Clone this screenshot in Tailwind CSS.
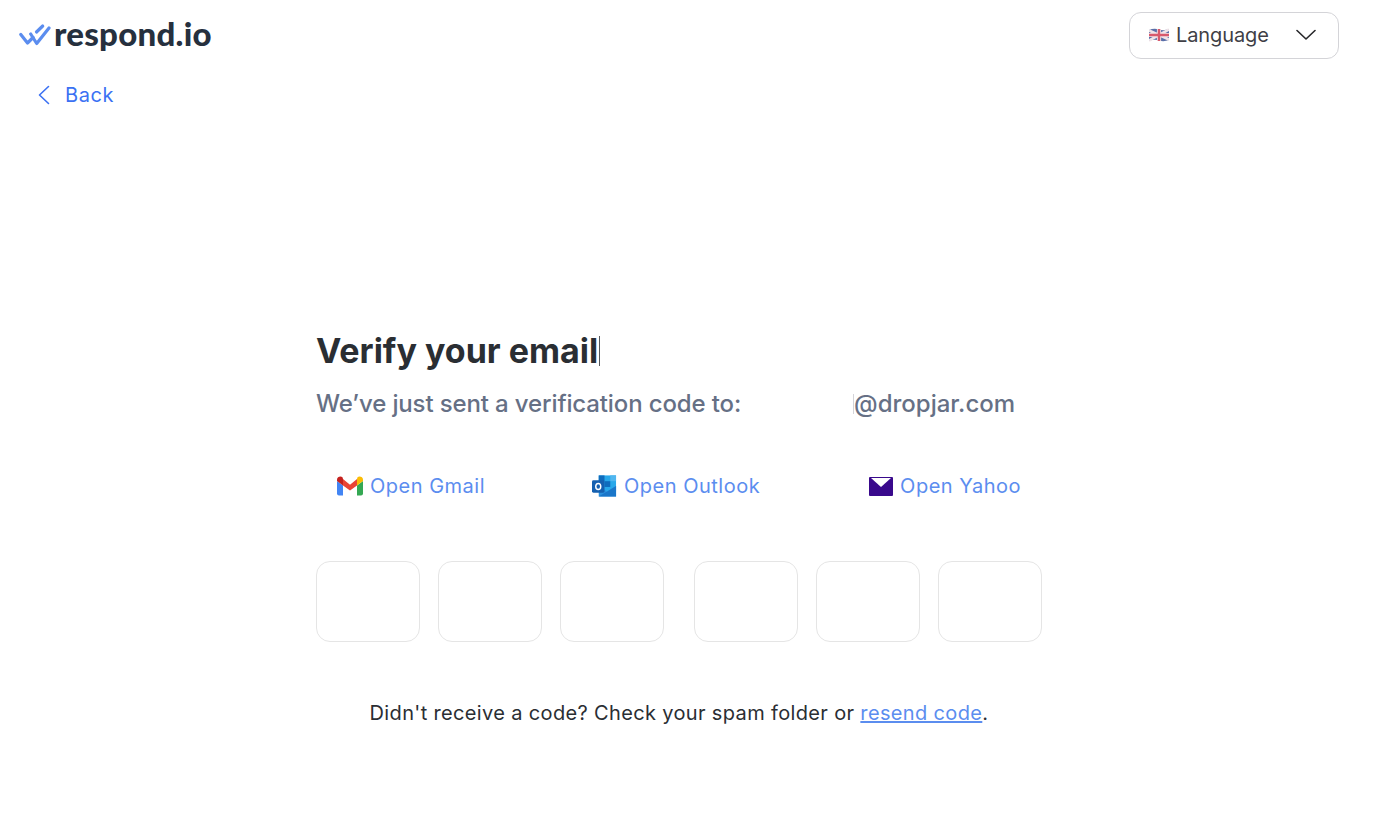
<!DOCTYPE html>
<html lang="en">

<head>
    <meta charset="UTF-8">
    <meta name="viewport" content="width=device-width, initial-scale=1.0">
    <script src="https://cdn.jsdelivr.net/npm/@tailwindcss/browser@4"></script>
    <title>Verify your email</title>
</head>

<body class="bg-white font-['Inter',sans-serif]">
    <div class="h-[819px] flex flex-col overflow-hidden">
        <header class="flex justify-between items-start pl-[19px] pr-[40px] pt-[12px]">
            <div class="flex flex-col">
                <a href="#" class="flex items-center gap-[3px] h-[43px]">
                    <svg width="32" height="24" viewBox="0 0 32 24" fill="none" stroke="#5b8def" stroke-width="3.2" stroke-linecap="round" stroke-linejoin="round">
                        <path d="M1.8 12.5 L8.5 21 L14 15.5" />
                        <path d="M11.7 12 L17.7 21.5 L30 6" />
                        <path d="M17.5 10 L23.7 4" />
                    </svg>
                    <span class="font-['Lato',sans-serif] font-black text-[33px] leading-none text-[#26303e] tracking-[0.25px]">respond.io</span>
                </a>
                <a href="#" class="flex items-center gap-[15px] pl-[19px] mt-[16px] h-[47px] text-[#3b71f3] text-[20px] tracking-[0.6px]">
                    <svg width="12" height="20" viewBox="0 0 12 20" fill="none" stroke="#3b71f3" stroke-width="1.6" stroke-linecap="round" stroke-linejoin="round">
                        <path d="M10.5 1.5 L1.5 10 L10.5 18.5" />
                    </svg>
                    Back
                </a>
            </div>
            <button class="w-[210px] h-[47px] flex items-center justify-between pl-[19px] pr-[22px] rounded-[12px] border border-[#d4d4d8] text-[20px] leading-[26px] tracking-[-0.1px] pb-[2px] text-[#3f3f46]">
                <span class="flex items-center gap-[7px]">
                    <svg width="20" height="14" viewBox="0 0 20 14">
                        <path d="M0 2 Q5 0 10 1.5 T20 1 V12 Q15 14 10 12.5 T0 13 Z" fill="#5a6fa8" />
                        <path d="M0 2.5 L20 11.5 M20 1.5 L0 12.5" stroke="#f1e4e8" stroke-width="2.6" />
                        <path d="M10 1 V13 M0 7 H20" stroke="#f1e4e8" stroke-width="4.2" />
                        <path d="M10 1 V13 M0 7 H20" stroke="#d8596c" stroke-width="2.4" />
                    </svg>
                    Language
                </span>
                <svg width="20" height="12" viewBox="0 0 20 12" fill="none" stroke="#27272a" stroke-width="1.6" stroke-linecap="round" stroke-linejoin="round">
                    <path d="M1 1.5 L10 10 L19 1.5" />
                </svg>
            </button>
        </header>

        <main class="w-[726px] ml-[316px] mt-[205px]">
            <div class="flex items-center h-[56px]">
                <h1 class="text-[34px] leading-[56px] font-bold text-[#2a2e33]">Verify your email</h1>
                <span class="w-px h-[30px] ml-px bg-[#55585c]"></span>
            </div>
            <div class="flex items-center mt-[9px] h-[32px] text-[24px] font-medium text-[#667085]">
                <span class="tracking-[-0.13px]">We’ve just sent a verification code to:</span>
                <span class="ml-[112px] w-px h-[20px] bg-[#d4d4d8]"></span>
                <span>@dropjar.com</span>
            </div>

            <div class="flex mt-[50px] h-[32px] text-[20px] tracking-[0.5px] text-[#5b8def]">
                <a href="#" class="flex items-center gap-[7px] ml-[21px]">
                    <svg width="26" height="20" viewBox="0 0 26 20">
                        <path d="M0 5 V17.5 Q0 19.5 2 19.5 H6 V9.5 Z" fill="#4285f4" />
                        <path d="M20 9.5 V19.5 H24 Q26 19.5 26 17.5 V5 Z" fill="#34a853" />
                        <path d="M6 3 L13 8.7 L20 3 V9.5 L13 14.5 L6 9.5 Z" fill="#ea4335" />
                        <path d="M20 3 L20.5 1.2 C22.5 -0.5 26 1 26 3.5 V5 L20 9.5 Z" fill="#fbbc04" />
                        <path d="M0 5 V3.5 C0 1 3.5 -0.5 5.5 1.2 L6 3 V9.5 Z" fill="#c5221f" />
                    </svg>
                    Open Gmail
                </a>
                <a href="#" class="flex items-center gap-[7px] ml-[107px]">
                    <svg width="25" height="24" viewBox="0 0 26 24">
                        <rect x="7" y="1" width="18" height="17" fill="#28a8ea" />
                        <rect x="7" y="1" width="6" height="6" fill="#0f6cbd" />
                        <rect x="19" y="1" width="6" height="6" fill="#50b6ef" />
                        <rect x="13" y="7" width="6" height="6" fill="#0f6cbd" />
                        <path d="M7 12 L16 18 L25 12 V23 H7 Z" fill="#2a8fdd" />
                        <path d="M7 23 L25 12 V23 Z" fill="#1a76c9" />
                        <rect x="0" y="6" width="13" height="13" rx="1.5" fill="#1560b0" />
                        <ellipse cx="6.5" cy="12.5" rx="2.6" ry="3.2" fill="none" stroke="#ffffff" stroke-width="1.5" />
                    </svg>
                    Open Outlook
                </a>
                <a href="#" class="flex items-center gap-[7px] ml-[109px]">
                    <svg width="24" height="20" viewBox="0 0 24 20">
                        <rect x="0" y="1" width="24" height="19" rx="1" fill="#39098c" />
                        <path d="M2 2 H22 L12 11 Z" fill="#ffffff" />
                    </svg>
                    Open Yahoo
                </a>
            </div>

            <div class="flex mt-[59px]">
                <div class="flex gap-[18px]">
                    <input class="w-[104px] h-[81px] rounded-[14px] border border-[#e5e5e5]" type="text" maxlength="1">
                    <input class="w-[104px] h-[81px] rounded-[14px] border border-[#e5e5e5]" type="text" maxlength="1">
                    <input class="w-[104px] h-[81px] rounded-[14px] border border-[#e5e5e5]" type="text" maxlength="1">
                </div>
                <div class="flex gap-[18px] ml-[30px]">
                    <input class="w-[104px] h-[81px] rounded-[14px] border border-[#e5e5e5]" type="text" maxlength="1">
                    <input class="w-[104px] h-[81px] rounded-[14px] border border-[#e5e5e5]" type="text" maxlength="1">
                    <input class="w-[104px] h-[81px] rounded-[14px] border border-[#e5e5e5]" type="text" maxlength="1">
                </div>
            </div>

            <p class="mt-[56px] text-center text-[20px] leading-[30px] tracking-[0.35px] text-[#2a2e33]">Didn't receive a code? Check your spam folder or <a href="#" class="text-[#5b8def] underline">resend code</a>.</p>
        </main>
    </div>
</body>

</html>
